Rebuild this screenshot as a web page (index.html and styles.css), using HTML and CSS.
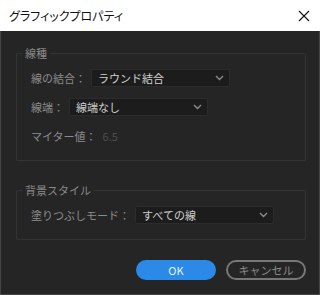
FILE: index.html
```html
<html>
<head>
    <title>グラフィックプロパティ</title>
    <link rel="stylesheet" href="styles.css">
</head>
<body>
    <div class="dialog">
        <div class="titlebar">
            <span class="title">グラフィックプロパティ</span>
            <svg class="close" width="12" height="12" viewBox="0 0 12 12">
                <path d="M1 1 L11 11 M11 1 L1 11" stroke="#111" stroke-width="1.1" fill="none"/>
            </svg>
        </div>
        <div class="content">
            <fieldset class="group">
                <legend>線種</legend>
                <div class="row">
                    <span class="label">線の結合：</span>
                    <div class="select">ラウンド結合<svg class="chev" width="9" height="6" viewBox="0 0 9 6"><path d="M1 1 L4.5 4.5 L8 1" stroke="#8a8a8a" stroke-width="1.4" fill="none"/></svg></div>
                </div>
                <div class="row">
                    <span class="label">線端：</span>
                    <div class="select">線端なし<svg class="chev" width="9" height="6" viewBox="0 0 9 6"><path d="M1 1 L4.5 4.5 L8 1" stroke="#8a8a8a" stroke-width="1.4" fill="none"/></svg></div>
                </div>
                <div class="row">
                    <span class="label">マイター値：</span>
                    <span class="value">6.5</span>
                </div>
            </fieldset>
            <fieldset class="group second">
                <legend>背景スタイル</legend>
                <div class="row">
                    <span class="label">塗りつぶしモード：</span>
                    <div class="select">すべての線<svg class="chev" width="9" height="6" viewBox="0 0 9 6"><path d="M1 1 L4.5 4.5 L8 1" stroke="#8a8a8a" stroke-width="1.4" fill="none"/></svg></div>
                </div>
            </fieldset>
            <div class="buttons">
                <button class="btn ok">OK</button>
                <button class="btn cancel">キャンセル</button>
            </div>
        </div>
    </div>
</body>
</html>
```

FILE: styles.css
```css
body {
    margin: 0;
    padding: 0;
    font-family: "Noto Sans CJK JP", "Noto Sans", sans-serif;
    background-color: #252525;
}

.dialog {
    width: 320px;
    height: 295px;
    box-sizing: border-box;
    background-color: #252525;
    border: 1px solid #444;
    border-top: none;
    display: flex;
    flex-direction: column;
}

.titlebar {
    height: 31px;
    margin: 0 -1px;
    background-color: #fff;
    display: flex;
    align-items: center;
    justify-content: space-between;
    padding: 0 10px 0 9px;
    box-sizing: border-box;
}

.title {
    font-size: 12px;
    color: #111;
    font-feature-settings: "palt";
}

.close {
    display: block;
}

.content {
    padding: 15px 13px 0 15px;
}

.group {
    margin: 0;
    padding: 9px 0 15px 5px;
    border: 1px solid #333;
    border-radius: 1px;
}

.group.second {
    margin-top: 22px;
}

legend {
    padding: 0 3px;
    font-size: 11px;
    line-height: 14px;
    color: #8a8a8a;
}

.row {
    display: flex;
    align-items: center;
    height: 18px;
    margin-left: 9px;
    margin-bottom: 11px;
}

.row:last-child {
    margin-bottom: 0;
}

.label {
    font-size: 11px;
    color: #8c8c8c;
    margin-right: 5px;
    white-space: nowrap;
}

.value {
    font-size: 11px;
    color: #4e4e4e;
    margin-left: 1px;
}

.select {
    width: 139px;
    height: 18px;
    box-sizing: border-box;
    background-color: #1c1c1c;
    border: 1px solid #2c2c2c;
    border-radius: 2px;
    padding: 0 5px 0 6px;
    display: flex;
    align-items: center;
    justify-content: space-between;
    font-size: 11px;
    color: #cfcfcf;
}

.buttons {
    display: flex;
    justify-content: flex-end;
    gap: 10px;
    margin-top: 20px;
}

.btn {
    width: 80px;
    height: 20px;
    border-radius: 10px;
    font-family: "Noto Sans CJK JP", "Noto Sans", sans-serif;
    font-size: 11px;
    padding: 0;
    box-sizing: border-box;
}

.ok {
    background-color: #2b8ae8;
    border: none;
    color: #eaf2fc;
}

.cancel {
    background-color: transparent;
    border: 2px solid #777;
    color: #8a8a8a;
}
```
